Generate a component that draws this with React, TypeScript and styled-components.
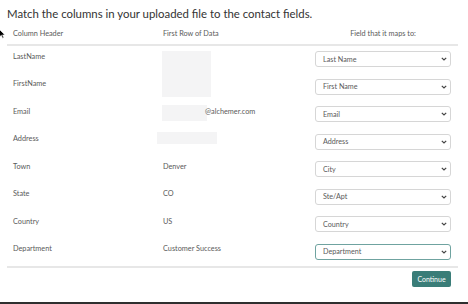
import styled, { createGlobalStyle } from 'styled-components';

const GlobalStyle = createGlobalStyle`
  html, body {
    margin: 0;
    padding: 0;
    background: #ffffff;
  }
  body {
    font-family: Lato, 'Open Sans', sans-serif;
  }
`;

const S = {
  Page: styled.div`
    position: relative;
    width: 468px;
    height: 304px;
    box-sizing: border-box;
    padding: 5px 10px 0 7px;
    border-bottom: 2px solid #2f2f2f;
    overflow: hidden;
  `,
  Title: styled.h1`
    margin: 0;
    font-size: 11.4px;
    font-weight: 400;
    line-height: 18px;
    color: #333;
  `,
  Table: styled.div`
    margin-top: 6px;
    display: grid;
    grid-template-columns: 150px 152px 136px;
    padding: 0 7px 0 6px;
  `,
  Row: styled.div`
    display: contents;
  `,
  HeadCell: styled.div<{ $center?: boolean }>`
    font-size: 7.3px;
    line-height: 10px;
    color: #5a5a5a;
    padding-bottom: 5px;
    text-align: ${({ $center }) => ($center ? 'center' : 'left')};
    border-bottom: 2px solid #e7e7e7;
    margin: 0 ${({ $center }) => ($center ? '-7px' : '0')} 0 ${({ $center }) => ($center ? '0' : '-6px')};
    padding-left: ${({ $center }) => ($center ? '0' : '6px')};
    padding-right: ${({ $center }) => ($center ? '7px' : '0')};
  `,
  Cell: styled.div`
    height: 27.5px;
    box-sizing: border-box;
    padding-top: 5.5px;
    font-size: 7.3px;
    line-height: 10px;
    color: #5a5a5a;
  `,
  DataCell: styled.div`
    height: 27.5px;
    box-sizing: border-box;
    padding-top: 5.5px;
    font-size: 7.3px;
    line-height: 10px;
    color: #5a5a5a;
    display: flex;
    align-items: flex-start;
  `,
  Blur: styled.div<{ $w: number; $h: number; $dx?: number; $dy?: number }>`
    flex: none;
    width: ${({ $w }) => $w}px;
    height: ${({ $h }) => $h}px;
    margin-left: ${({ $dx }) => $dx ?? 0}px;
    margin-top: ${({ $dy }) => $dy ?? 0}px;
    background: #f4f4f5;
  `,
  Email: styled.span`
    margin-left: -2px;
  `,
  SelectCell: styled.div`
    height: 27.5px;
    box-sizing: border-box;
    padding-top: 5px;
  `,
  Select: styled.div<{ $focus?: boolean }>`
    height: 16px;
    box-sizing: border-box;
    border: 1px solid ${({ $focus }) => ($focus ? '#6fa3a0' : '#d6d6d6')};
    border-radius: 3px;
    background: #fff;
    display: flex;
    align-items: center;
    justify-content: space-between;
    padding: 0 3px 0 7px;
    font-size: 7.2px;
    color: #5a5a5a;
  `,
  Footer: styled.div`
    grid-column: 1 / -1;
    margin: 0 -7px 0 -6px;
    border-top: 2px solid #e7e7e7;
    display: flex;
    justify-content: flex-end;
    padding: 3px 7px 0 0;
  `,
  Button: styled.button`
    width: 39px;
    height: 16px;
    padding: 0;
    border: none;
    border-radius: 2px;
    background: #3a7d78;
    color: #fff;
    font-family: Lato, sans-serif;
    font-size: 7px;
    cursor: pointer;
  `,
  Cursor: styled.svg`
    position: absolute;
    left: -1px;
    top: 29px;
  `,
};

const Chevron = () => (
  <svg width="6" height="4" viewBox="0 0 6 4">
    <path d="M0.8 0.8 L3 3 L5.2 0.8" fill="none" stroke="#444" strokeWidth="1.2" />
  </svg>
);

type Row = {
  header: string;
  data?: React.ReactNode;
  field: string;
  focus?: boolean;
};

const rows: Row[] = [
  { header: 'LastName', data: <S.Blur $w={49} $h={46} $dx={-1} $dy={-0.5} />, field: 'Last Name' },
  { header: 'FirstName', field: 'First Name' },
  {
    header: 'Email',
    data: (
      <>
        <S.Blur $w={45} $h={16} $dx={-1} $dy={-1.5} />
        <S.Email>@alchemer.com</S.Email>
      </>
    ),
    field: 'Email',
  },
  { header: 'Address', data: <S.Blur $w={60} $h={12} $dx={-6} $dy={-2} />, field: 'Address' },
  { header: 'Town', data: 'Denver', field: 'City' },
  { header: 'State', data: 'CO', field: 'Ste/Apt' },
  { header: 'Country', data: 'US', field: 'Country' },
  { header: 'Department', data: 'Customer Success', field: 'Department', focus: true },
];

export default function App() {
  return (
    <>
      <GlobalStyle />
      <S.Page>
        <S.Title>Match the columns in your uploaded file to the contact fields.</S.Title>
        <S.Table>
          <S.Row>
            <S.HeadCell>Column Header</S.HeadCell>
            <S.HeadCell>First Row of Data</S.HeadCell>
            <S.HeadCell $center>Field that it maps to:</S.HeadCell>
          </S.Row>
          {rows.map((r) => (
            <S.Row key={r.header}>
              <S.Cell>{r.header}</S.Cell>
              <S.DataCell>{r.data}</S.DataCell>
              <S.SelectCell>
                <S.Select $focus={r.focus}>
                  <span>{r.field}</span>
                  <Chevron />
                </S.Select>
              </S.SelectCell>
            </S.Row>
          ))}
          <S.Footer>
            <S.Button>Continue</S.Button>
          </S.Footer>
        </S.Table>
        <S.Cursor width="7" height="10" viewBox="0 0 7 10">
          <path d="M0.5 0.5 L0.5 8 L2.3 6.3 L3.6 9.3 L4.8 8.8 L3.6 5.9 L6 5.9 Z" fill="#000" stroke="#fff" strokeWidth="0.6" />
        </S.Cursor>
      </S.Page>
    </>
  );
}
